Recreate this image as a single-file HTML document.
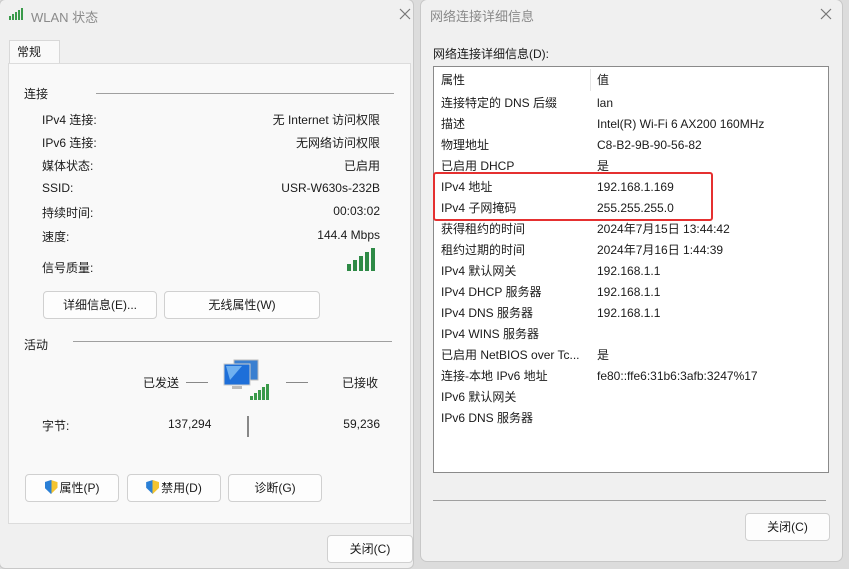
<!DOCTYPE html><html><head><meta charset="utf-8"><style>
*{margin:0;padding:0;box-sizing:border-box}
body{width:849px;height:564px;background:#dcdcdc;position:relative;overflow:hidden;font-family:"Liberation Sans","Noto Sans CJK SC",sans-serif;font-size:12px;color:#1a1a1a}
.a{position:absolute;white-space:nowrap}
.win{position:absolute;background:#f0f0f0;border:1px solid #c8c8c8}
.btn{position:absolute;background:#fdfdfd;border:1px solid #d0d0d0;border-radius:4px;text-align:center;font-size:12px;color:#1a1a1a}
.r{text-align:right}
.hl{position:absolute;height:1px;background:#a0a0a0}
.sh{display:inline-block;width:13px;height:14px;vertical-align:-2px;margin-right:2px;background:linear-gradient(90deg,#2a7fd6 50%,#f4c430 50%);clip-path:polygon(50% 0,100% 15%,100% 55%,50% 100%,0 55%,0 15%)}
</style></head><body>
<!-- left window -->
<div class="win" style="left:-1px;top:-1px;width:415px;height:570px;border-radius:6px"></div>
<svg class="a" style="left:9px;top:8px" width="16" height="12"><g fill="#3a9a4a"><rect x="0" y="8" width="2" height="4"/><rect x="3" y="6" width="2" height="6"/><rect x="6" y="4" width="2" height="8"/><rect x="9" y="2" width="2" height="10"/><rect x="12" y="0" width="2" height="12"/></g></svg>
<div class="a" style="left:31px;top:7px;color:#8a8a8a;font-size:13px">WLAN 状态</div>
<svg class="a" style="left:399px;top:8px" width="12" height="12"><path d="M1 1L11 11M11 1L1 11" stroke="#777" stroke-width="1.2"/></svg>
<div class="a" style="left:9px;top:40px;width:51px;height:24px;background:#f9f9f9;border:1px solid #d8d8d8;border-bottom:none;padding:2px 0 0 7px;font-size:12px">常规</div>
<div class="a" style="left:8px;top:63px;width:403px;height:461px;background:#f9f9f9;border:1px solid #dcdcdc"></div>
<div class="a" style="left:24px;top:85px">连接</div><div class="hl" style="left:96px;top:93px;width:298px"></div>
<div class="a" style="left:42px;top:111px">IPv4 连接:</div><div class="a r" style="right:469px;top:111px">无 Internet 访问权限</div>
<div class="a" style="left:42px;top:134px">IPv6 连接:</div><div class="a r" style="right:469px;top:134px">无网络访问权限</div>
<div class="a" style="left:42px;top:157px">媒体状态:</div><div class="a r" style="right:469px;top:157px">已启用</div>
<div class="a" style="left:42px;top:181px">SSID:</div><div class="a r" style="right:469px;top:181px">USR-W630s-232B</div>
<div class="a" style="left:42px;top:204px">持续时间:</div><div class="a r" style="right:469px;top:204px">00:03:02</div>
<div class="a" style="left:42px;top:228px">速度:</div><div class="a r" style="right:469px;top:228px">144.4 Mbps</div>
<div class="a" style="left:42px;top:259px">信号质量:</div>
<svg class="a" style="left:347px;top:247px" width="30" height="25"><g fill="#2e8a46"><rect x="0" y="17" width="4" height="7"/><rect x="6" y="13" width="4" height="11"/><rect x="12" y="9" width="4" height="15"/><rect x="18" y="5" width="4" height="19"/><rect x="24" y="1" width="4" height="23"/></g></svg>
<div class="btn" style="left:43px;top:291px;width:114px;height:28px;line-height:26px">详细信息(E)...</div>
<div class="btn" style="left:164px;top:291px;width:156px;height:28px;line-height:26px">无线属性(W)</div>
<div class="a" style="left:24px;top:336px">活动</div><div class="hl" style="left:73px;top:341px;width:319px"></div>
<div class="a" style="left:143px;top:374px">已发送</div><div class="hl" style="left:186px;top:382px;width:22px;background:#888"></div>
<svg class="a" style="left:222px;top:358px" width="50" height="45"><rect x="12" y="2" width="24" height="20" fill="#3a7fd0" stroke="#bbb"/><rect x="2" y="6" width="26" height="21" fill="#1e6fd9" stroke="#ccc"/><path d="M4 8 L20 8 L8 22 Z" fill="#6fb0f0"/><rect x="10" y="28" width="10" height="3" fill="#bbb"/><g fill="#3a9a4a"><rect x="28" y="38" width="3" height="4"/><rect x="32" y="35" width="3" height="7"/><rect x="36" y="32" width="3" height="10"/><rect x="40" y="29" width="3" height="13"/><rect x="44" y="26" width="3" height="16"/></g></svg>
<div class="hl" style="left:286px;top:382px;width:22px;background:#888"></div><div class="a" style="left:342px;top:374px">已接收</div>
<div class="a" style="left:42px;top:417px">字节:</div><div class="a" style="left:168px;top:417px">137,294</div>
<div class="a" style="left:247px;top:416px;width:2px;height:21px;background:#888"></div>
<div class="a r" style="right:469px;top:417px">59,236</div>
<div class="btn" style="left:25px;top:474px;width:94px;height:28px;line-height:26px"><span class="sh"></span>属性(P)</div>
<div class="btn" style="left:127px;top:474px;width:94px;height:28px;line-height:26px"><span class="sh"></span>禁用(D)</div>
<div class="btn" style="left:228px;top:474px;width:94px;height:28px;line-height:26px">诊断(G)</div>
<div class="btn" style="left:327px;top:535px;width:86px;height:28px;line-height:26px">关闭(C)</div>
<!-- right window -->
<div class="win" style="left:420px;top:-1px;width:423px;height:563px;border-radius:7px"></div>
<div class="a" style="left:430px;top:6px;color:#8a8a8a;font-size:13px">网络连接详细信息</div>
<svg class="a" style="left:820px;top:8px" width="12" height="12"><path d="M1 1L11 11M11 1L1 11" stroke="#777" stroke-width="1.2"/></svg>
<div class="a" style="left:433px;top:45px">网络连接详细信息(D):</div>
<div class="a" style="left:433px;top:66px;width:396px;height:407px;background:#fff;border:1px solid #8a8a8a"></div>
<div class="a" style="left:590px;top:69px;width:1px;height:22px;background:#e5e5e5"></div>
<div class="a" style="left:441px;top:71px">属性</div><div class="a" style="left:597px;top:71px">值</div>
<div class="a" style="left:441px;top:93px;line-height:21px">连接特定的 DNS 后缀<br>描述<br>物理地址<br>已启用 DHCP<br>IPv4 地址<br>IPv4 子网掩码<br>获得租约的时间<br>租约过期的时间<br>IPv4 默认网关<br>IPv4 DHCP 服务器<br>IPv4 DNS 服务器<br>IPv4 WINS 服务器<br>已启用 NetBIOS over Tc...<br>连接-本地 IPv6 地址<br>IPv6 默认网关<br>IPv6 DNS 服务器</div>
<div class="a" style="left:597px;top:93px;line-height:21px">lan<br>Intel(R) Wi-Fi 6 AX200 160MHz<br>C8-B2-9B-90-56-82<br>是<br>192.168.1.169<br>255.255.255.0<br>2024年7月15日 13:44:42<br>2024年7月16日 1:44:39<br>192.168.1.1<br>192.168.1.1<br>192.168.1.1<br><br>是<br>fe80::ffe6:31b6:3afb:3247%17</div>
<div class="a" style="left:433px;top:172px;width:280px;height:49px;border:2px solid #e53030;border-radius:3px"></div>
<div class="hl" style="left:433px;top:500px;width:393px"></div>
<div class="btn" style="left:745px;top:513px;width:85px;height:28px;line-height:26px">关闭(C)</div>
</body></html>
